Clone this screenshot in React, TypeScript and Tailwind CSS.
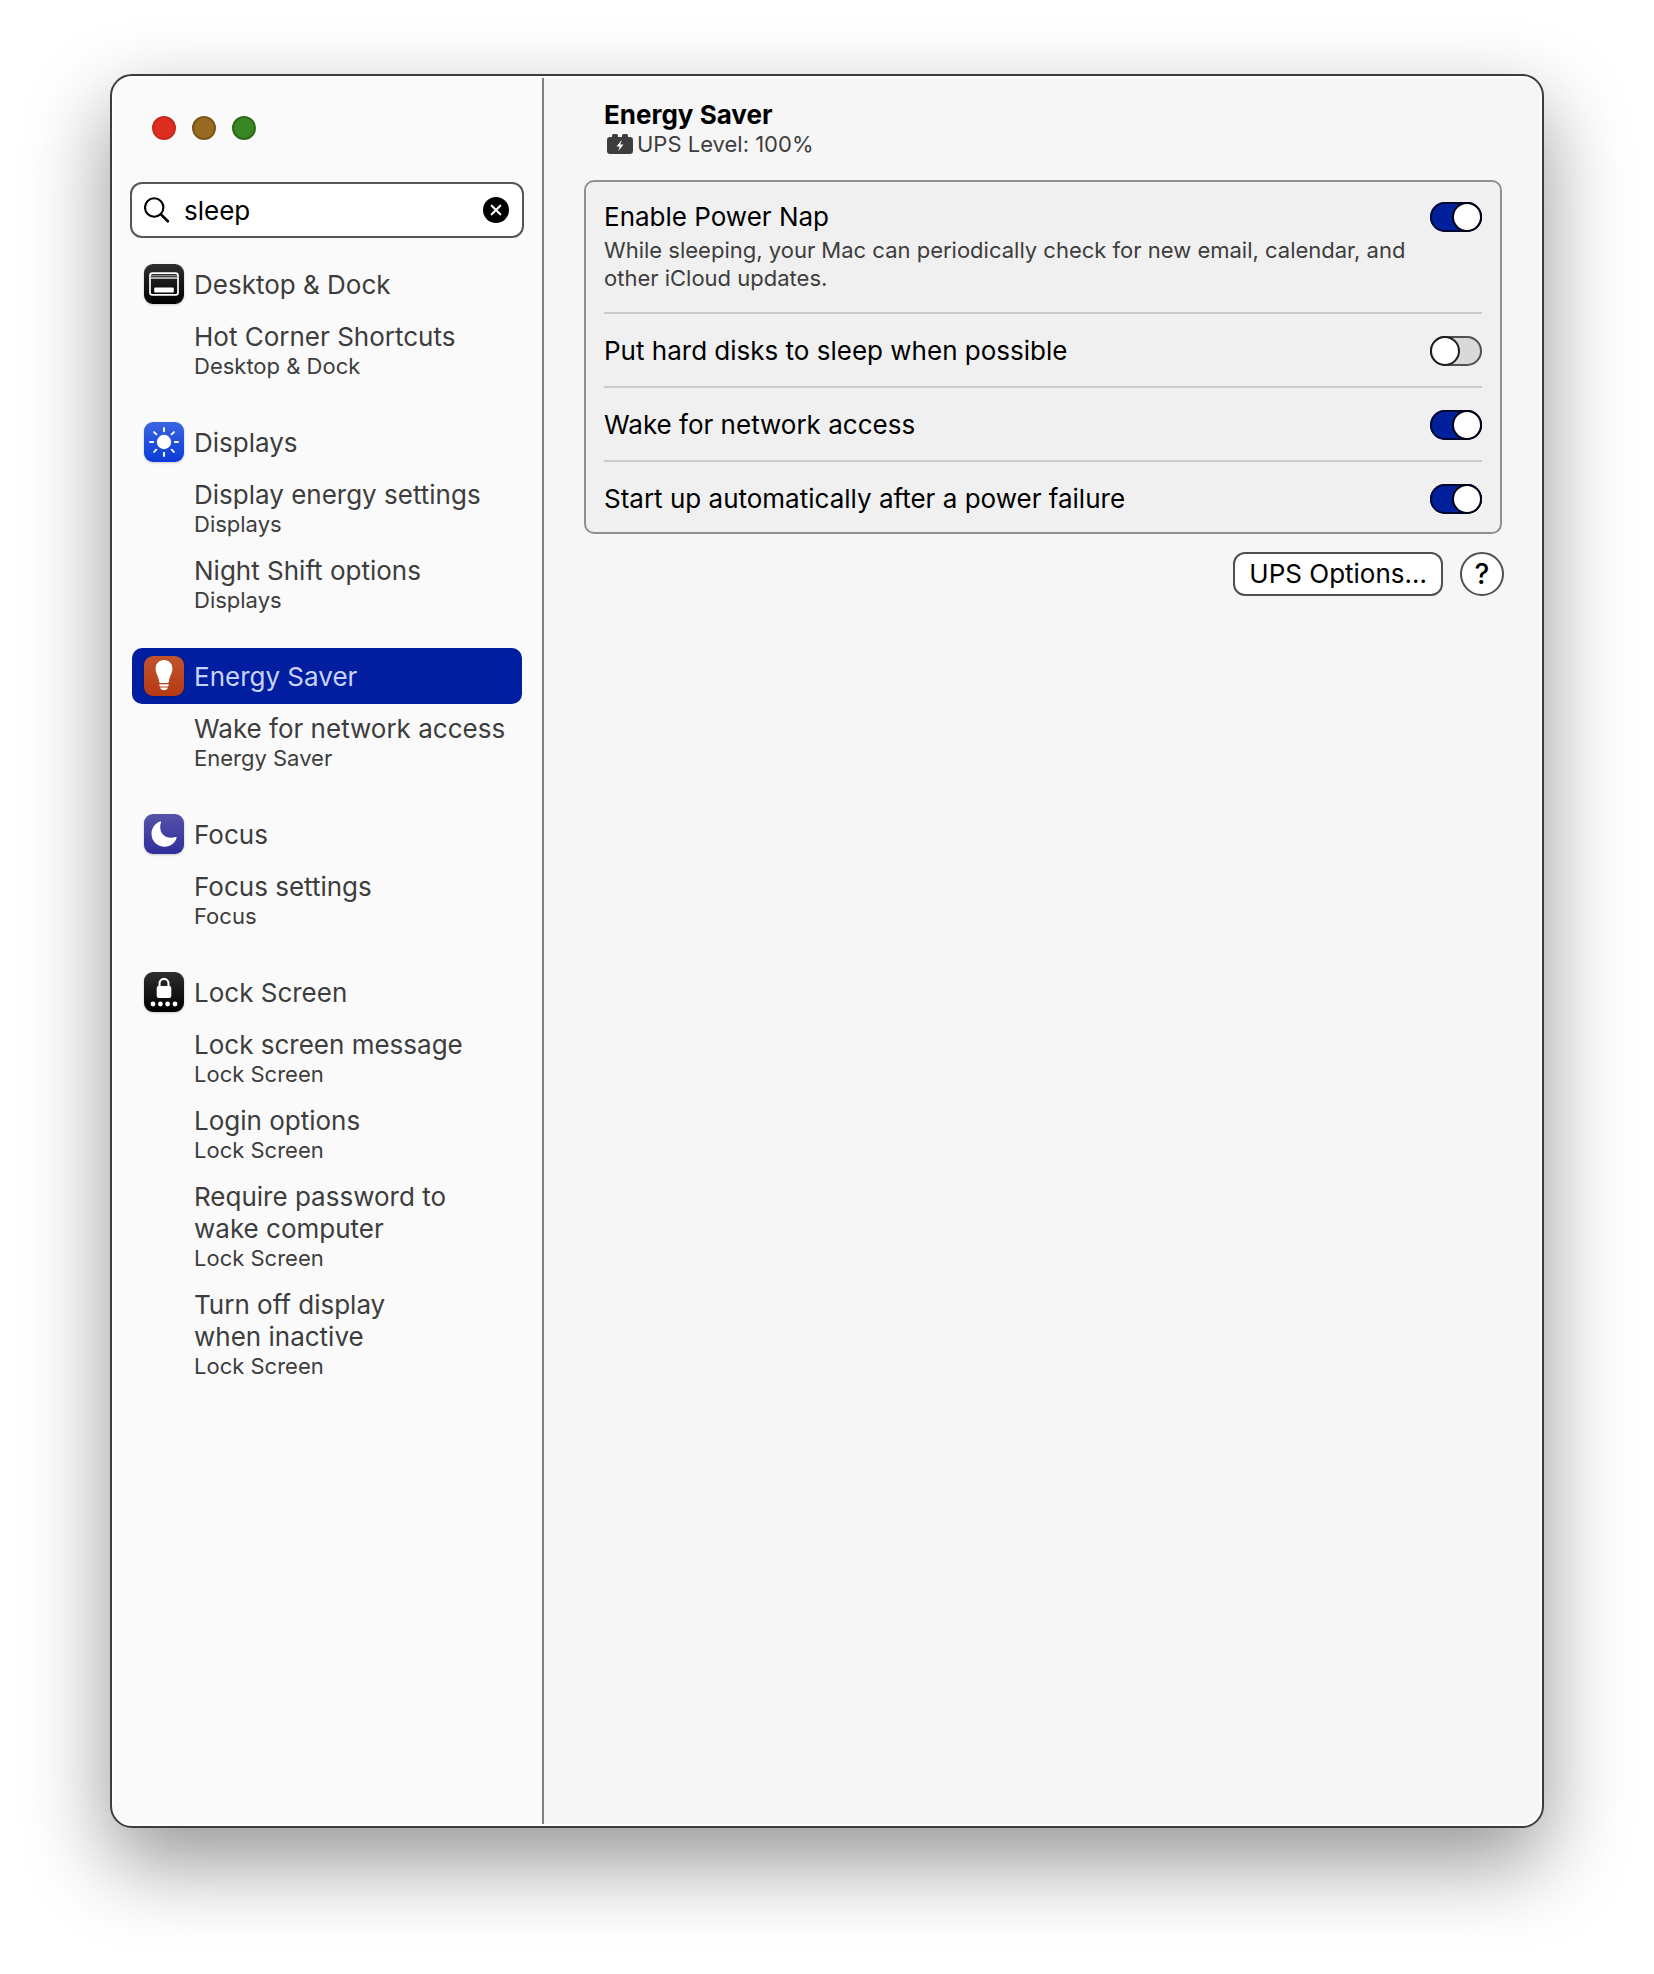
import { useState } from 'react';
import type { ReactNode } from 'react';

type Result = { title: string; narrow?: boolean };
type Group = { name: string; icon: ReactNode; results: Result[] };

function IconTile({ id, from, to, children }: { id: string; from: string; to: string; children: ReactNode }) {
  return (
    <svg viewBox="0 0 40 40" className="size-10 shrink-0 drop-shadow-[0_1px_1px_rgba(0,0,0,0.2)]" aria-hidden="true">
      <defs>
        <linearGradient id={id} x1="0" y1="0" x2="0" y2="1">
          <stop offset="0" stopColor={from} />
          <stop offset="1" stopColor={to} />
        </linearGradient>
      </defs>
      <rect width="40" height="40" rx="9" fill={`url(#${id})`} />
      {children}
    </svg>
  );
}

function DockIcon() {
  return (
    <IconTile id="tile-dock" from="#2e2e2e" to="#000000">
      <rect x="6" y="9.2" width="28" height="21.6" rx="2.4" fill="none" stroke="#fff" strokeWidth="1.7" />
      <path d="M7 11.6h26" stroke="#8a8a8a" strokeWidth="1.4" />
      <path d="M7 14h26" stroke="#fff" strokeWidth="1.3" />
      <rect x="10.2" y="23.6" width="19.6" height="5" rx="1" fill="#fff" />
    </IconTile>
  );
}

function DisplaysIcon() {
  return (
    <IconTile id="tile-displays" from="#3a66df" to="#0b3bd9">
      <circle cx="20" cy="20" r="7.2" fill="#fff" />
      <g stroke="#fff" strokeWidth="1.9" strokeLinecap="round">
        {[0, 45, 90, 135, 180, 225, 270, 315].map((angle) => (
          <path key={angle} d="M20 6v3.2" transform={`rotate(${angle} 20 20)`} />
        ))}
      </g>
    </IconTile>
  );
}

function BulbIcon() {
  return (
    <IconTile id="tile-bulb" from="#c0532c" to="#b63a12">
      <path
        d="M20 4c-5 0-8.4 3.6-8.4 8.4 0 5.6 3.2 7.4 3.5 13.2.05 1 .5 1.4 1.3 1.4h7.2c.8 0 1.25-.4 1.3-1.4.3-5.8 3.5-7.6 3.5-13.2C28.4 7.6 25 4 20 4z"
        fill="#fff"
      />
      <path d="M15.4 28.2h9.2v1.3a1 1 0 0 1-1 1h-7.2a1 1 0 0 1-1-1z" fill="#fff" />
      <path d="M16.2 31.5h7.6c-.3 1.7-1.8 2.7-3.8 2.7s-3.5-1-3.8-2.7z" fill="#fff" />
    </IconTile>
  );
}

function MoonIcon() {
  return (
    <IconTile id="tile-moon" from="#5653a8" to="#2f2d9c">
      <path
        d="M15.9 7.6c.8-.35 1.4.2 1.1 1-.5 1.3-.8 2.7-.8 4.3 0 6.4 4.4 10.8 10.9 10.8 1.6 0 3-.2 4.3-.7.9-.3 1.5.3 1.2 1.1C31 29.2 26.5 32.8 20.7 32.8 13.2 32.8 7.5 27.2 7.5 19.8c0-5.6 3.4-10.3 8.4-12.2z"
        fill="#fff"
      />
    </IconTile>
  );
}

function LockIcon() {
  return (
    <IconTile id="tile-lock" from="#2e2e2e" to="#000000">
      <path d="M15.5 15v-3.6a4.5 4.5 0 0 1 9 0V15" fill="none" stroke="#fff" strokeWidth="2.1" />
      <rect x="12.7" y="13.9" width="14.6" height="12" rx="2" fill="#fff" />
      {[9, 16.4, 23.6, 31].map((cx) => (
        <circle key={cx} cx={cx} cy="32" r="2.4" fill="#fff" />
      ))}
    </IconTile>
  );
}

const groups: Group[] = [
  { name: 'Desktop & Dock', icon: <DockIcon />, results: [{ title: 'Hot Corner Shortcuts' }] },
  {
    name: 'Displays',
    icon: <DisplaysIcon />,
    results: [{ title: 'Display energy settings' }, { title: 'Night Shift options' }],
  },
  { name: 'Energy Saver', icon: <BulbIcon />, results: [{ title: 'Wake for network access' }] },
  { name: 'Focus', icon: <MoonIcon />, results: [{ title: 'Focus settings' }] },
  {
    name: 'Lock Screen',
    icon: <LockIcon />,
    results: [
      { title: 'Lock screen message' },
      { title: 'Login options' },
      { title: 'Require password to wake computer', narrow: true },
      { title: 'Turn off display when inactive', narrow: true },
    ],
  },
];

const settings = [
  {
    id: 'power-nap',
    label: 'Enable Power Nap',
    hint: 'While sleeping, your Mac can periodically check for new email, calendar, and other iCloud updates.',
    on: true,
  },
  { id: 'disk-sleep', label: 'Put hard disks to sleep when possible', on: false },
  { id: 'network-wake', label: 'Wake for network access', on: true },
  { id: 'auto-start', label: 'Start up automatically after a power failure', on: true },
];

function Switch({ id, defaultChecked }: { id: string; defaultChecked: boolean }) {
  return (
    <input
      id={id}
      type="checkbox"
      role="switch"
      defaultChecked={defaultChecked}
      className="flex h-[30px] w-[52px] shrink-0 appearance-none rounded-full bg-[#d9d9d9] shadow-[inset_0_0_0_2px_#505050] before:block before:size-[30px] before:rounded-full before:border-2 before:border-[#1c1c1c] before:bg-white checked:justify-end checked:bg-[#00209c] checked:shadow-[inset_0_0_0_2px_#000833] checked:before:border-[#00020f]"
    />
  );
}

function SearchField() {
  const [query, setQuery] = useState('sleep');

  return (
    <div className="mt-[42px] mr-[18px] ml-4 flex h-14 items-center rounded-xl border-2 border-[#555555] bg-white pr-[13px] pl-3">
      <svg viewBox="0 0 26 26" className="size-[26px] shrink-0" fill="none" stroke="#000" aria-hidden="true">
        <circle cx="10.2" cy="10.5" r="9.2" strokeWidth="2.1" />
        <path d="M17 17.4l6.8 6.8" strokeWidth="2.7" strokeLinecap="round" />
      </svg>
      <input
        type="text"
        aria-label="Search"
        value={query}
        onChange={(e) => setQuery(e.target.value)}
        className="ml-3.5 w-0 flex-1 bg-transparent pt-0.5 text-[26px] leading-8 text-black outline-none"
      />
      <button type="button" aria-label="Clear search" onClick={() => setQuery('')} className="shrink-0">
        <svg viewBox="0 0 26 26" className="size-[26px]" aria-hidden="true">
          <circle cx="13" cy="13" r="13" fill="#000" />
          <path d="M8.7 8.7l8.6 8.6M17.3 8.7l-8.6 8.6" stroke="#fff" strokeWidth="2.1" strokeLinecap="round" />
        </svg>
      </button>
    </div>
  );
}

function Sidebar() {
  return (
    <aside className="w-[430px] shrink-0 border-r-2 border-[#808080] bg-[#fafafa]">
      <div className="flex gap-4 pt-[38px] pl-[38px]">
        <button type="button" aria-label="Close" className="size-6 rounded-full border-2 border-[#c32a1e] bg-[#dc2f21]" />
        <button type="button" aria-label="Minimize" className="size-6 rounded-full border-2 border-[#7b551a] bg-[#986a22]" />
        <button type="button" aria-label="Zoom" className="size-6 rounded-full border-2 border-[#2c691a] bg-[#3a8622]" />
      </div>

      <SearchField />

      <nav className="mt-[18px] mr-5 ml-[18px] flex flex-col gap-[26px]">
        {groups.map((group) => {
          const selected = group.name === 'Energy Saver';
          return (
            <section key={group.name}>
              <a
                href="#"
                aria-current={selected ? 'page' : undefined}
                className={`flex h-14 items-center gap-2.5 rounded-[10px] px-3 text-[26px] leading-8 ${
                  selected ? 'bg-[#001e9f] text-[#c9d2f7]' : 'text-[#3d3d3d]'
                }`}
              >
                {group.icon}
                <span className="pt-0.5">{group.name}</span>
              </a>
              <ul>
                {group.results.map((result) => (
                  <li key={result.title}>
                    <a
                      href="#"
                      className={`block py-[9px] pl-[62px] text-[#3d3d3d] ${result.narrow ? 'pr-[70px]' : ''}`}
                    >
                      <span className="block text-[26px] leading-8">{result.title}</span>
                      <span className="block text-[22px] leading-[26px]">{group.name}</span>
                    </a>
                  </li>
                ))}
              </ul>
            </section>
          );
        })}
      </nav>
    </aside>
  );
}

function UpsIcon() {
  return (
    <svg viewBox="0 0 26 20" className="h-5 w-[26px] shrink-0" aria-hidden="true">
      <path
        d="M5 3V1.5A1.5 1.5 0 0 1 6.5 0h3A1.5 1.5 0 0 1 11 1.5V3h4V1.5A1.5 1.5 0 0 1 16.5 0h3A1.5 1.5 0 0 1 21 1.5V3h2a3 3 0 0 1 3 3v11a3 3 0 0 1-3 3H3a3 3 0 0 1-3-3V6a3 3 0 0 1 3-3z"
        fill="#3d3d3d"
      />
      <path d="M14.8 5.8L9.6 12.4h3.1l-1.5 4.8 5.3-6.8h-3.2z" fill="#fff" />
    </svg>
  );
}

export default function App() {
  return (
    <div className="flex min-h-screen bg-white px-[110px] pt-[74px] pb-[146px] font-['Inter','Liberation_Sans',sans-serif]">
      <div className="flex flex-1 rounded-[22px] border-2 border-[#3d3d3d] bg-[#fefefe] p-0.5 shadow-[0_34px_84px_rgba(0,0,0,0.42)]">
        <div className="flex flex-1 overflow-hidden rounded-[18px]">
          <Sidebar />

          <main className="flex-1 bg-[#f6f6f6] pr-9 pl-10">
            <header className="pt-[21px] pl-5">
              <h1 className="text-[26px] leading-8 font-bold text-black">Energy Saver</h1>
              <p className="flex items-center gap-1 pl-[3px] text-[22px] leading-[26px] text-[#3d3d3d]">
                <UpsIcon />
                UPS Level: 100%
              </p>
            </header>

            <div className="mt-[23px] mr-0.5 rounded-[10px] border-2 border-[#909090] bg-[#f0f0f0] px-[18px]">
              {settings.map(({ id, label, hint, on }) => (
                <div
                  key={id}
                  className="flex items-start justify-between gap-5 border-b-2 border-[#cbcbcb] pt-[22px] pb-5 first:pt-5 last:border-b-0 last:pb-[18px]"
                >
                  <div>
                    <label htmlFor={id} className="block text-[26px] leading-[30px] text-black">
                      {label}
                    </label>
                    {hint && <p className="mt-1 text-[22px] leading-7 text-[#3d3d3d]">{hint}</p>}
                  </div>
                  <Switch id={id} defaultChecked={on} />
                </div>
              ))}
            </div>

            <div className="mt-[18px] flex justify-end gap-[17px]">
              <button
                type="button"
                className="h-11 rounded-xl border-2 border-[#505050] bg-white px-3.5 text-[26px] leading-8 text-black"
              >
                UPS Options...
              </button>
              <button
                type="button"
                aria-label="Help"
                className="size-11 rounded-full border-2 border-[#505050] bg-white text-[28px] leading-8 font-medium text-black"
              >
                ?
              </button>
            </div>
          </main>
        </div>
      </div>
    </div>
  );
}
